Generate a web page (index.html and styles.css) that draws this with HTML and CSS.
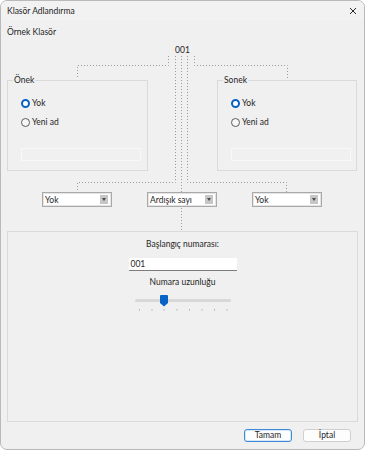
FILE: index.html
```html
<!DOCTYPE html>
<html lang="tr">
<head>
  <meta charset="UTF-8">
  <title>Klasör Adlandırma</title>
  <link rel="stylesheet" href="styles.css">
</head>
<body>
  <div class="dialog">
    <div class="titlebar">
      <span>Klasör Adlandırma</span>
      <svg class="close" width="8" height="8" viewBox="0 0 8 8">
        <path d="M1 1 L7 7 M7 1 L1 7" stroke="#2b2b2b" stroke-width="1" fill="none"/>
      </svg>
    </div>

    <div class="content">
      <div class="sample-label">Örnek Klasör</div>
      <div class="preview">001</div>

      <div class="groups">
        <div class="group">
          <span class="group-title">Önek</span>
          <div class="radio checked"><span class="dot"></span>Yok</div>
          <div class="radio"><span class="dot"></span>Yeni ad</div>
          <div class="disabled-box"></div>
        </div>
        <div class="group right">
          <span class="group-title">Sonek</span>
          <div class="radio checked"><span class="dot"></span>Yok</div>
          <div class="radio"><span class="dot"></span>Yeni ad</div>
          <div class="disabled-box"></div>
        </div>
      </div>

      <div class="combos">
        <div class="combo">Yok<span class="arrow"></span></div>
        <div class="combo">Ardışık sayı<span class="arrow"></span></div>
        <div class="combo">Yok<span class="arrow"></span></div>
      </div>

      <div class="panel">
        <div class="field-label">Başlangıç numarası:</div>
        <div class="textbox">001</div>
        <div class="field-label second">Numara uzunluğu</div>
        <svg class="slider" width="98" height="18" viewBox="0 0 98 18">
          <rect x="0" y="5" width="96" height="3" rx="1.5" fill="#d8d8d8"/>
          <path d="M25 2 Q25 1 26 1 H32 Q33 1 33 2 V9 L29 12.5 L25 9 Z" fill="#0a62c4"/>
          <g fill="#b0b0b0">
            <rect x="4" y="15" width="1" height="1.5"/>
            <rect x="16.5" y="15" width="1" height="1.5"/>
            <rect x="28.5" y="15" width="1" height="1.5"/>
            <rect x="41.5" y="15" width="1" height="1.5"/>
            <rect x="54" y="15" width="1" height="1.5"/>
            <rect x="66.5" y="15" width="1" height="1.5"/>
            <rect x="79" y="15" width="1" height="1.5"/>
            <rect x="91.5" y="15" width="1" height="1.5"/>
          </g>
        </svg>
      </div>

      <div class="buttons">
        <button class="btn default">Tamam</button>
        <button class="btn">İptal</button>
      </div>
    </div>

    <!-- dotted connector lines of the preview diagram -->
    <svg class="connectors" width="365" height="450" viewBox="0 0 365 450">
      <g stroke="#9a9a9a" stroke-width="1" stroke-dasharray="1 2" fill="none">
        <path d="M168.5 56 V65.5 H77.5 V78"/>
        <path d="M175.5 56 V182.5 H77.5 V192"/>
        <path d="M181.5 56 V192"/>
        <path d="M181.5 208 V230"/>
        <path d="M187.5 56 V182.5 H286.5 V192"/>
        <path d="M194.5 56 V65.5 H287.5 V78"/>
      </g>
    </svg>
  </div>
</body>
</html>
```

FILE: styles.css
```css
* {
  box-sizing: border-box;
}

body {
  margin: 0;
  background: #ffffff;
  font-family: Lato, "Liberation Sans", sans-serif;
  font-size: 8.5px;
  color: #1f1f1f;
}

.dialog {
  position: relative;
  width: 365px;
  height: 450px;
  background: #f0f0f0;
  border: 1px solid #b9b9b9;
  border-radius: 7px;
  overflow: hidden;
}

.titlebar {
  height: 19px;
  padding: 1px 6px 0 6px;
  display: flex;
  align-items: center;
  justify-content: space-between;
  background: #f2f2f2;
}

.close {
  display: block;
  margin-right: 1px;
}

.content {
  padding: 0 6px;
}

.sample-label {
  margin-top: 7px;
  height: 11px;
  line-height: 11px;
}

.preview {
  margin-top: 7px;
  height: 11px;
  line-height: 11px;
  text-align: center;
}

.groups {
  margin-top: 24px;
  display: flex;
  justify-content: space-between;
}

.group {
  position: relative;
  width: 141px;
  height: 91px;
  border: 1px solid #dadada;
  padding: 17px 0 0 13px;
}

.group.right {
  width: 140px;
  margin-right: 1px;
}

.group-title {
  position: absolute;
  top: -6px;
  left: 5px;
  padding: 0 1px;
  line-height: 11px;
  background: #f0f0f0;
}

.radio {
  display: flex;
  align-items: center;
  height: 11px;
  line-height: 11px;
}

.radio + .radio {
  margin-top: 8px;
}

.dot {
  width: 9px;
  height: 9px;
  margin-right: 2px;
  border-radius: 50%;
  border: 1px solid #5c5c5c;
  background: #f7f7f7;
}

.radio.checked .dot {
  border: 2.5px solid #0a62c4;
  background: #ffffff;
}

.disabled-box {
  margin-top: 20px;
  width: 120px;
  height: 13px;
  border: 1px solid #f8f8f8;
  background: #f0f0f0;
}

.combos {
  margin-top: 21px;
  padding-left: 35px;
  display: flex;
  gap: 35px;
}

.combo {
  position: relative;
  width: 70px;
  height: 15px;
  line-height: 14px;
  padding-left: 2px;
  background: #ffffff;
  border: 1px solid #a9a9a9;
  box-shadow: inset 0 0 0 1px #e4e4e4;
}

.arrow {
  position: absolute;
  right: 3px;
  top: 2px;
  width: 8px;
  height: 9px;
  background: #c6c6c6;
}

.arrow::after {
  content: '';
  position: absolute;
  left: 1.5px;
  top: 3px;
  border-left: 2.5px solid transparent;
  border-right: 2.5px solid transparent;
  border-top: 3px solid #4a4a4a;
}

.panel {
  margin-top: 24px;
  height: 191px;
  border: 1px solid #dadada;
  padding-top: 7px;
  display: flex;
  flex-direction: column;
  align-items: center;
}

.field-label {
  height: 11px;
  line-height: 11px;
}

.field-label.second {
  margin-top: 6px;
}

.textbox {
  margin-top: 8px;
  width: 108px;
  height: 13px;
  line-height: 13px;
  padding-left: 2px;
  background: #ffffff;
  border-bottom: 1px solid #7d7d7d;
}

.slider {
  display: block;
  margin-top: 6px;
  margin-left: 2px;
}

.buttons {
  margin-top: 7px;
  padding-right: 7px;
  display: flex;
  justify-content: flex-end;
  gap: 11px;
}

.btn {
  width: 48px;
  height: 13px;
  padding: 0;
  font-family: inherit;
  font-size: 8.5px;
  line-height: 11px;
  color: #1f1f1f;
  background: #fdfdfd;
  border: 1px solid #cfcfcf;
  border-radius: 3px;
}

.btn.default {
  border-color: #3f8ad6;
  box-shadow: inset 0 0 0 1px #d6e7f8;
}

.connectors {
  position: absolute;
  left: -1px;
  top: -1px;
  pointer-events: none;
}
```
